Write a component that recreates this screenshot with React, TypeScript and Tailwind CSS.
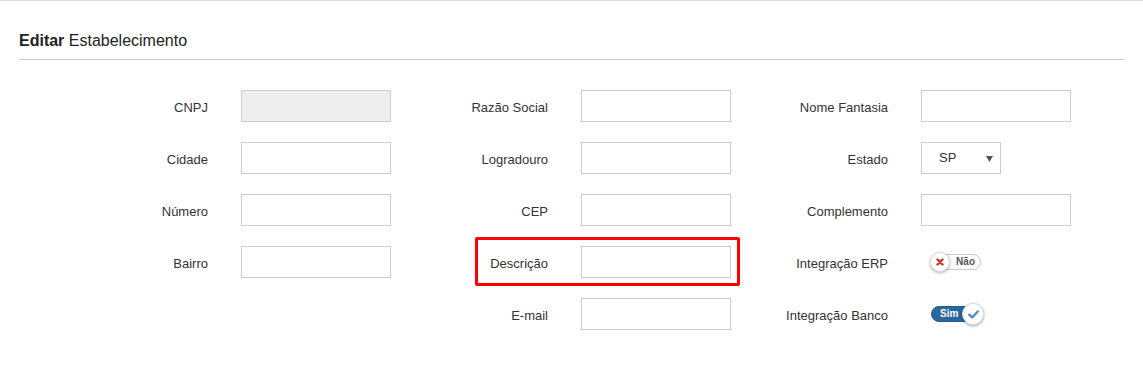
import React from 'react';

type Field =
  | { kind: 'input'; label: string; disabled?: boolean; highlight?: boolean }
  | { kind: 'select'; label: string; value: string }
  | { kind: 'toggle'; label: string; on: boolean }
  | { kind: 'empty' };

const rows: Field[][] = [
  [
    { kind: 'input', label: 'CNPJ', disabled: true },
    { kind: 'input', label: 'Razão Social' },
    { kind: 'input', label: 'Nome Fantasia' },
  ],
  [
    { kind: 'input', label: 'Cidade' },
    { kind: 'input', label: 'Logradouro' },
    { kind: 'select', label: 'Estado', value: 'SP' },
  ],
  [
    { kind: 'input', label: 'Número' },
    { kind: 'input', label: 'CEP' },
    { kind: 'input', label: 'Complemento' },
  ],
  [
    { kind: 'input', label: 'Bairro' },
    { kind: 'input', label: 'Descrição', highlight: true },
    { kind: 'toggle', label: 'Integração ERP', on: false },
  ],
  [
    { kind: 'empty' },
    { kind: 'input', label: 'E-mail' },
    { kind: 'toggle', label: 'Integração Banco', on: true },
  ],
];

const Toggle = ({ on }: { on: boolean }) => {
  if (on) {
    return (
      <div className="relative flex items-center w-[54px] h-[22px] ml-[9px]">
        <div className="ml-[1px] h-[16px] w-[48px] rounded-full bg-[#2b679f] border border-[#245a8c] flex items-center pl-[8px]">
          <span className="text-[10px] font-bold text-white leading-none">Sim</span>
        </div>
        <div className="absolute right-0 top-0 w-[22px] h-[22px] rounded-full bg-white border border-[#ddd] shadow-[0_1px_3px_rgba(0,0,0,0.35)] flex items-center justify-center">
          <svg width="11" height="9" viewBox="0 0 11 9">
            <path d="M1.2 4.6 L4.2 7.4 L9.8 1.4" fill="none" stroke="#4a8bc4" strokeWidth="2.2" strokeLinecap="round" strokeLinejoin="round" />
          </svg>
        </div>
      </div>
    );
  }
  return (
    <div className="relative flex items-center w-[52px] h-[20px] ml-[9px]">
      <div className="ml-[6px] h-[16px] w-[45px] rounded-full bg-white border border-[#c8c8c8] flex items-center justify-end pr-[5px]">
        <span className="text-[10px] font-bold text-[#555] leading-none">Não</span>
      </div>
      <div className="absolute left-0 top-0 w-[20px] h-[20px] rounded-full bg-white border border-[#ddd] shadow-[0_1px_3px_rgba(0,0,0,0.35)] flex items-center justify-center">
        <svg width="8" height="8" viewBox="0 0 8 8">
          <path d="M1.5 1.5 L6.5 6.5 M6.5 1.5 L1.5 6.5" stroke="#c9302c" strokeWidth="2.4" strokeLinecap="round" />
        </svg>
      </div>
    </div>
  );
};

const FieldCell = ({ field }: { field: Field }) => {
  if (field.kind === 'empty') return <div />;
  return (
    <div className="relative flex items-center h-[32px]">
      {field.kind === 'input' && field.highlight && (
        <div className="absolute top-[-9px] left-[84px] right-[-9px] bottom-[-8px] border-[3px] border-[#f00] rounded-[2px] pointer-events-none" />
      )}
      <label className="w-[157px] shrink-0 text-right text-[13px] text-[#333] pt-[4px]">{field.label}</label>
      <div className="ml-[33px]">
        {field.kind === 'input' && (
          <input
            type="text"
            disabled={field.disabled}
            className={
              'block w-[150px] h-[32px] border border-[#ccc] outline-none px-3 text-[13px] ' +
              (field.disabled ? 'bg-[#eee]' : 'bg-white')
            }
          />
        )}
        {field.kind === 'select' && (
          <div className="relative w-[80px] h-[32px] border border-[#ccc] bg-white flex items-center pl-[17px] text-[13px] text-[#333]">
            {field.value}
            <svg className="absolute right-[7px] top-[13px]" width="7" height="6" viewBox="0 0 7 6">
              <path d="M0 0 L7 0 L3.5 6 Z" fill="#555" />
            </svg>
          </div>
        )}
        {field.kind === 'toggle' && <Toggle on={field.on} />}
      </div>
    </div>
  );
};

export default function App() {
  return (
    <div className="h-[380px] bg-white border-t border-[#ddd] font-['Liberation_Sans',Arial,sans-serif] text-[#333]">
      <div className="px-[19px]">
        <h3 className="pt-[30px] pb-[8px] leading-[20px] text-[16px] border-b border-[#ccc] text-[#222]">
          <span className="font-bold">Editar</span> Estabelecimento
        </h3>
      </div>
      <div className="pt-[30px] pl-[51px] grid grid-cols-[340px_340px_340px] gap-y-[20px]">
        {rows.map((row, i) => (
          <React.Fragment key={i}>
            {row.map((f, j) => (
              <FieldCell key={j} field={f} />
            ))}
          </React.Fragment>
        ))}
      </div>
    </div>
  );
}
